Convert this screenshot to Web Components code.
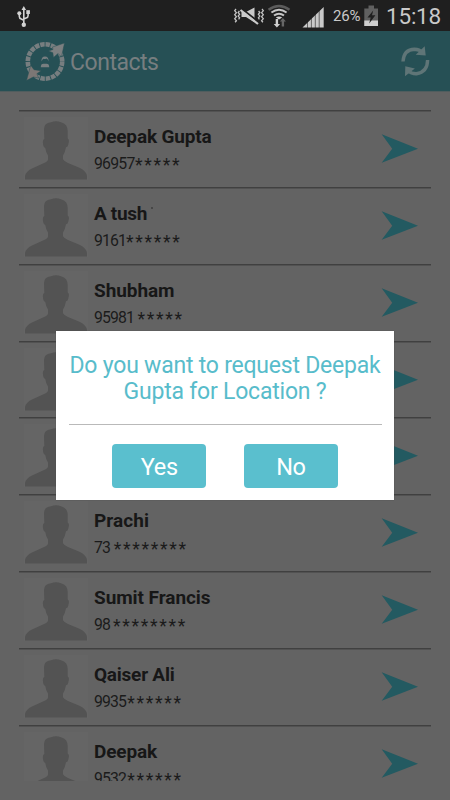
<!DOCTYPE html>
<html lang="en">
<head>
<meta charset="utf-8">
<title>Contacts</title>
<style>
html,body{margin:0;height:100%;overflow:hidden;background:#636363;font-family:Roboto,"Noto Sans",sans-serif}
</style>
</head>
<body>
<contacts-screen></contacts-screen>
<script>
class Base extends HTMLElement {
  render(html) {
    if (!this.shadowRoot) this.attachShadow({mode: "open"});
    this.shadowRoot.innerHTML = html;
  }
}

/* A single line of text spread to a given width */
class FitText extends Base {
  connectedCallback() {
    this.render(`<style>:host{display:block;white-space:pre}span{display:inline-block}</style><span></span>`);
    const s = this.shadowRoot.querySelector("span");
    const t = this.getAttribute("text");
    s.textContent = t;
    const n = s.getBoundingClientRect().width;
    const w = parseFloat(this.getAttribute("w"));
    const gap = (w - n) / t.length;
    s.style.letterSpacing = gap.toFixed(3) + "px";
  }
}
customElements.define("fit-text", FitText);

class StatusBar extends Base {
  connectedCallback() {
    this.render(`<style>
:host{display:flex;height:31px;background:#1f1f1f;color:#c9c9c9;align-items:center;box-sizing:border-box}
svg{display:block;flex:none}
.pct{font-size:15px;line-height:31px;margin-left:8px;width:29px;padding-top:2px}
.time{font-size:22.500px;line-height:31px;padding-top:1px}
</style>
<svg width="40" height="31" viewBox="0 0 40 31" fill="#d2d2d2"><path d="M23.8 6l2.3 4h-4.600z"/><circle cx="23.800" cy="24.800" r="2.200"/><circle cx="19.300" cy="13.200" r="2"/><path d="M26.300 10.200h3.600v3.800h-3.600z"/><path d="M23.800 8v16M19.300 13v3.500q0 2 2 2.500l2.500 1.200M28.100 13v2.500q0 2-2 2.600l-2.300 1" fill="none" stroke="#d2d2d2" stroke-width="1.600"/></svg>
<svg style="margin-left:193px" width="32" height="31" viewBox="233 0 32 31"><g fill="none" stroke="#c4c4c4" stroke-width="1.300"><path d="M236 9l-1.300 1.700 1.700 2-1.700 2 1.700 2-1.700 2 1.700 2-1.300 1.500M239.400 11l-1.200 1.500 1.400 1.800-1.400 1.800 1.400 1.800-1 1.500M262 9l1.300 1.700-1.700 2 1.700 2-1.700 2 1.700 2-1.700 2 1.300 1.500M258.600 11l1.200 1.500-1.400 1.800 1.400 1.800-1.400 1.800 1 1.500"/></g><path d="M241.500 12h4.500l8.500-4.500v15l-8.500-5.500h-4.500z" fill="#cacaca"/><path d="M241 8.300L258.500 22" stroke="#1f1f1f" stroke-width="2"/><path d="M240.500 10L258 24" stroke="#cacaca" stroke-width="2.200"/></svg>
<svg width="33" height="31" viewBox="265 0 33 31"><g fill="none"><path d="M268.500 9.800q10.500-7.600 21 0" stroke="#5b5b5b" stroke-width="2.300"/><path d="M271.400 12.500q7.600-5.500 15.200 0M274 15.500q5-3.700 10 0" stroke="#c6c6c6" stroke-width="2"/></g><path d="M275.800 17.500q3.200-2 6.400 0l-3.200 2z" fill="#d0d0d0"/><path d="M275.700 19h2.400v5h2l-3.200 3.500-3.200-3.500h2z" fill="#d0d0d0"/><path d="M281.700 26.500h2.400v-5h1.800l-3-3.600-3 3.600h1.800z" fill="#666"/></svg>
<svg width="27" height="31" viewBox="298 0 27 31"><path d="M302.500 27.500L323.700 7v20.500z" fill="#c9c9c9"/><path d="M307.500 20v8M311.400 17v11M315.300 12v16M319.200 8v20" stroke="#1f1f1f" stroke-width=".6"/></svg>
<fit-text class="pct" text="26%" w="27.500"></fit-text>
<svg style="margin-left:1px" width="17" height="31" viewBox="363 0 17 31"><path d="M368.500 5.500h5.500v3h4V26h-13.700V8.500h4.200z" fill="#606060"/><path d="M364.300 20.500H378V26h-13.700z" fill="#cecece"/><path d="M373.200 10.500l-5.700 7h3.200l-1.500 6 6.200-8.200H372z" fill="#1f1f1f"/></svg>
<fit-text class="time" style="margin-left:6px" text="15:18" w="55"></fit-text>`);
  }
}
customElements.define("status-bar", StatusBar);

class AppHeader extends Base {
  connectedCallback() {
    this.render(`<style>
:host{display:flex;height:61px;background:#265055;color:#777e80;align-items:center;border-bottom:1px solid #505d5e;box-sizing:border-box}
svg{flex:none;display:block}
.t{font-size:23px;line-height:61px;flex:1;padding-top:2px}
</style>
<svg width="70" height="61" viewBox="0 31 70 61"><circle cx="45" cy="61.500" r="17.200" fill="none" stroke="#777e80" stroke-width="4.600" stroke-dasharray="4.500 .904"/><g stroke="#265055" stroke-width=".5"><path d="M64.500 43l-3 13.800-3.500-3.300-4.500 4-.7-4.800-4.300-1.700 4.500-1.500-.5-2.500z" fill="#7c7f80"/><path d="M26.500 80.500l4.200-15.300 3.300 4.500 7.200 1-4.300 3 1.800 4.300-5.400-1z" fill="#7c7775"/></g><path d="M40.800 67.200q0-3.400 2.600-3.400h3.200q2.600 0 2.600 3.400z" fill="#777e80"/><path d="M41.500 61.500q-.3-5 3.500-5t3.500 5q-.5-2.500-2-3-2 1-3.200.3-.8.700-1.800 2.700z" fill="#777e80"/></svg>
<fit-text class="t" text="Contacts" w="88.500"></fit-text>
<svg width="50" height="61" viewBox="400 31 50 61"><g fill="none" stroke="#5f7577" stroke-width="3.400"><path d="M403 61.500Q403.800 49.500 414.500 49.300q5 .2 8 3.400M427.600 60Q427.500 72 416.500 73.800q-5 .2-8.500-3"/></g><path d="M424.700 46.300l1 9.300-10-.8zM405 76.300l.3-10 9.600 2.200z" fill="#5f7577"/></svg>`);
  }
}
customElements.define("app-header", AppHeader);

class ContactRow extends Base {
  connectedCallback() {
    const a = n => this.getAttribute(n);
    this.render(`<style>
:host{display:flex;height:76.870px;border-top:1px solid #404040;box-shadow:inset 0 1px #525252;box-sizing:border-box;flex:none}
.av{display:block;flex:none;margin:6px 0 0 5px;width:64px;height:66px}
.tx{margin-left:6px;flex:1}
.name{font-size:19px;font-weight:700;line-height:24px;color:#171717;padding-top:14px}
.line{display:flex;color:#1b1b1b;height:24px;margin-top:3px}
.num{font-size:15.800px;line-height:24px}
.stars{font-size:17.500px;line-height:24px;padding-top:1px;box-sizing:border-box;height:26px}
.go{display:block;flex:none;margin:23px 13px 0 0}
</style>
<svg class="av" viewBox="0 0 64 66"><path d="M0 0h64v63H0z" fill="#656565"/><path d="M20 12Q20 6 27 5.200q5-2 10 0Q43.700 7 43.700 14v7.500q2 1 .8 5-.5 3.500-2.500 3.800-1 5.700-3 8.200v3.800q1 2.200 5 3.700l12 5Q62.500 54.500 63 59v3.500H1V59q.8-4.500 7-7.500l11-5q5-1.800 5-4V38.500Q22 36 21.200 30.700q-1.700-.2-2.200-4-.6-4 1.300-4.700z" fill="#535353"/></svg>
<div class="tx"><fit-text class="name" text="${a("name")}" w="${a("nw")}"></fit-text>
<div class="line"><fit-text class="num" text="${a("num")}" w="${a("dw")}" style="width:${a("sx")}px"></fit-text><fit-text class="stars" text="${"*".repeat(+a("stars"))}" w="${a("stars") * 9.25}"></fit-text></div></div>
<svg class="go" width="37" height="29" viewBox="381 134 37 29"><path d="M381.700 134.300L418 148.700l-36.300 14.100 10.500-14.100z" fill="#235a61"/></svg>`);
  }
}
customElements.define("contact-row", ContactRow);

class TealButton extends Base {
  connectedCallback() {
    this.render(`<style>:host{display:flex;width:94px;height:44px;border-radius:4px;background:#5abfce;color:#fff;font-size:23.500px;align-items:center;justify-content:center;padding-top:2px;box-sizing:border-box}</style><fit-text text="${this.getAttribute("label")}" w="${this.getAttribute("w")}"></fit-text>`);
  }
}
customElements.define("teal-button", TealButton);

class ConfirmDialog extends Base {
  connectedCallback() {
    this.render(`<style>
:host{display:flex;flex-direction:column;align-items:center;background:#fff;color:#58bccb;width:338px;height:169px;box-sizing:border-box;padding-top:22px;box-shadow:0 0 1px 0 #4b4b4b}
.q{font-size:23px;line-height:26px}
hr{width:313px;height:1px;border:0;background:#b9b9b9;margin:19px 0 19px}
.b{display:flex;gap:37.500px}
</style>
<fit-text class="q" text="Do you want to request Deepak" w="311"></fit-text>
<fit-text class="q" text="Gupta for Location ?" w="203"></fit-text>
<hr><div class="b"><teal-button label="Yes" w="37"></teal-button><teal-button label="No" w="29"></teal-button></div>`);
  }
}
customElements.define("confirm-dialog", ConfirmDialog);

class ContactsScreen extends Base {
  connectedCallback() {
    const rows = [
      ["Deepak Gupta", 117.5, "96957", 40.5, 41, 5],
      ["A tush", 53, "9161", 32, 32, 6],
      ["Shubham", 80.5, "95981", 40, 43.5, 5],
      null,
      null,
      ["Prachi", 55, "73", 16, 19.8, 8],
      ["Sumit Francis", 116.5, "98", 16, 19, 8],
      ["Qaiser Ali", 80.5, "9935", 32, 33.3, 6],
      ["Deepak", 63, "9532", 32, 33.3, 6]];
    this.render(`<style>
:host{display:block;position:relative;width:450px;height:800px;overflow:hidden;background:#636363}
.list{display:flex;flex-direction:column;margin:18px 19px 0;height:671px;overflow:hidden}
confirm-dialog{position:absolute;left:56px;top:331px}
.tick{position:absolute;left:151px;top:207px;width:2px;height:2px;background:#474747}
</style>
<status-bar></status-bar><app-header></app-header>
<div class="list">${rows.map(r => {
      const [n, nw, d, dw, sx, s] = r || ["", 0, "", 0, 0, 0];
      return `<contact-row name="${n}" nw="${nw}" num="${d}" dw="${dw}" sx="${sx}" stars="${s}"></contact-row>`;
    }).join("")}</div>
<div class="tick"></div>
<confirm-dialog></confirm-dialog>`);
  }
}
customElements.define("contacts-screen", ContactsScreen);
</script>
</body>
</html>
